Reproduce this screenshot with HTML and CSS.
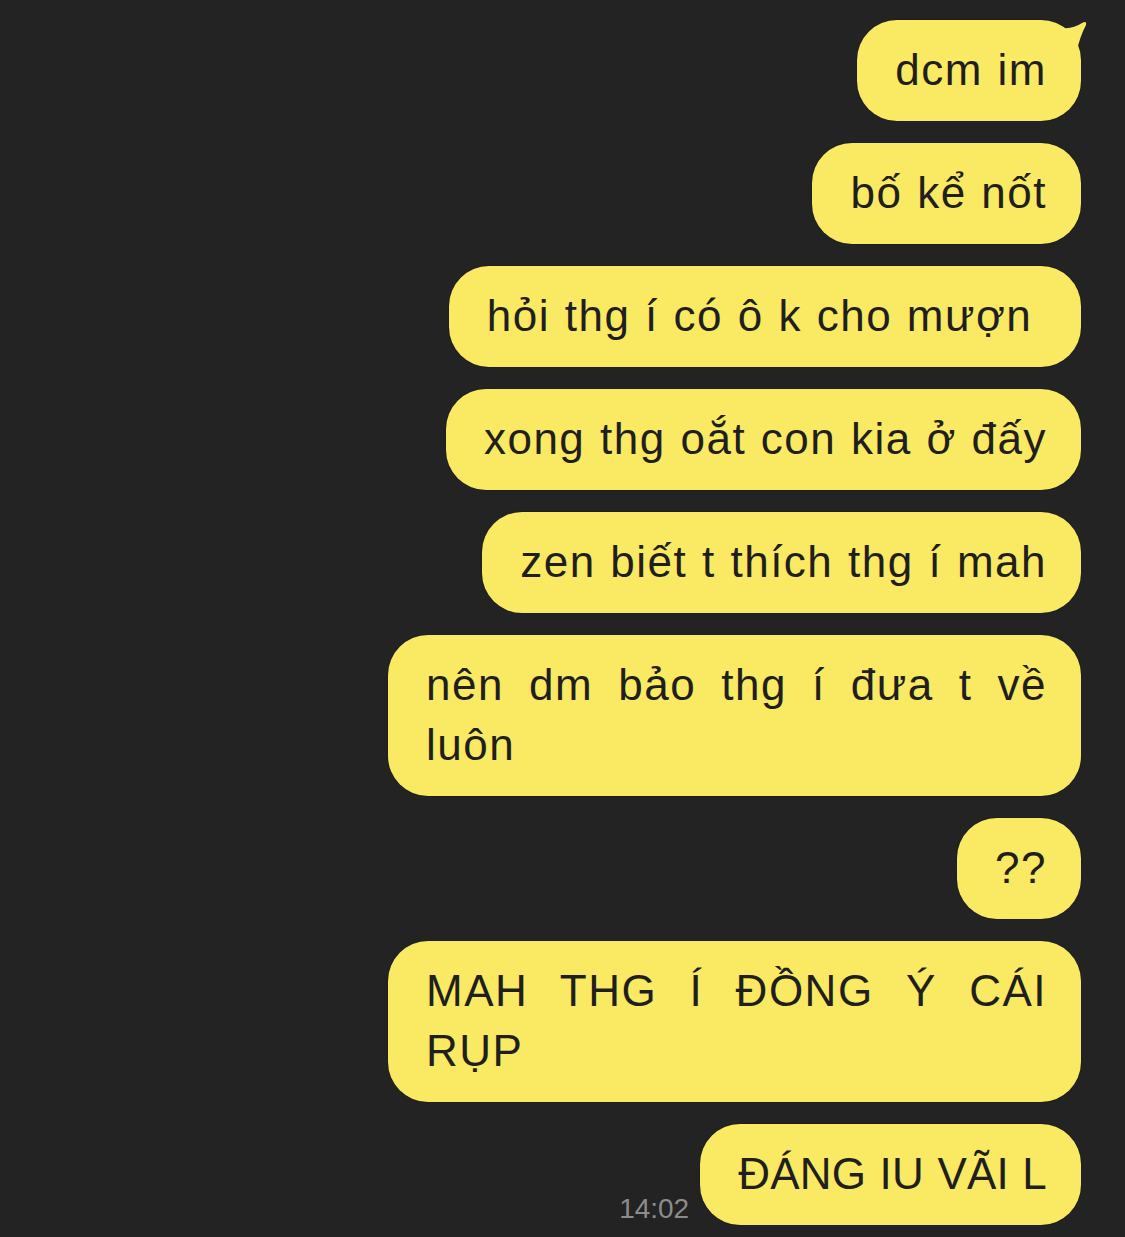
FILE: index.html
```html
<!DOCTYPE html>
<html lang="vi">
<head>
    <meta charset="UTF-8">
    <meta name="viewport" content="width=device-width, initial-scale=1.0">
    <title>Chat</title>
    <link rel="stylesheet" href="styles.css">
</head>
<body>
    <div class="chat">
        <div class="msg">
            <div class="bubble first">
                dcm im
                <svg class="tail" width="24" height="34" viewBox="0 0 24 34">
                    <path d="M0 8 Q10 9 19 3 Q24 0 23 5 Q17 16 13 34 L0 34 Z" fill="#fae962"/>
                </svg>
            </div>
        </div>
        <div class="msg"><div class="bubble">bố kể nốt</div></div>
        <div class="msg"><div class="bubble">hỏi thg í có ô k cho mượn&nbsp;</div></div>
        <div class="msg"><div class="bubble">xong thg oắt con kia ở đấy</div></div>
        <div class="msg"><div class="bubble">zen biết t thích thg í mah</div></div>
        <div class="msg"><div class="bubble wrap">nên dm bảo thg í đưa t về luôn</div></div>
        <div class="msg"><div class="bubble">??</div></div>
        <div class="msg"><div class="bubble wrap">MAH THG Í ĐỒNG Ý CÁI RỤP</div></div>
        <div class="msg">
            <span class="time">14:02</span>
            <div class="bubble caps">ĐÁNG IU VÃI L</div>
        </div>
    </div>
</body>
</html>
```

FILE: styles.css
```css
* {
    margin: 0;
    padding: 0;
    box-sizing: border-box;
}

body {
    background: #232323;
    font-family: 'Liberation Sans', Arial, sans-serif;
    min-height: 100vh;
}

.chat {
    display: flex;
    flex-direction: column;
    align-items: flex-end;
    gap: 22px;
    padding: 20px 44px 0 0;
}

.msg {
    display: flex;
    align-items: flex-end;
    gap: 11px;
}

.bubble {
    position: relative;
    background: #fae962;
    color: #1f1f1f;
    font-size: 44px;
    letter-spacing: 1.5px;
    word-spacing: 1px;
    line-height: 60px;
    padding: 20px 34px 21px 38px;
    border-radius: 40px;
    box-shadow: 0 0 0 1px rgba(0, 0, 0, 0.12);
    max-width: 693px;
    white-space: nowrap;
}

.bubble.wrap {
    white-space: normal;
    width: 693px;
    text-align: justify;
}

.bubble.caps {
    letter-spacing: 0.2px;
}

.tail {
    position: absolute;
    top: 0;
    right: -6px;
}

.time {
    color: #8c8c8c;
    font-size: 28px;
    line-height: 28px;
    margin-bottom: 2px;
}
```
